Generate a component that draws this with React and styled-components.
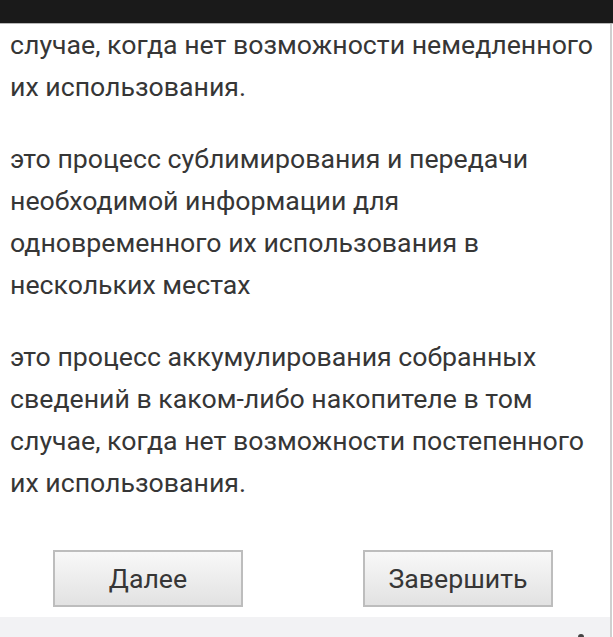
import React from 'react';
import styled, {createGlobalStyle} from 'styled-components';

const GlobalStyle = createGlobalStyle`
  html, body {
    margin: 0;
    padding: 0;
    background: #ffffff;
    font-family: Roboto, "Noto Sans", sans-serif;
    overflow: hidden;
  }
`;

const Screen = styled.div`
  width: 613px;
  height: 637px;
  display: flex;
  flex-direction: column;
  overflow: hidden;
`;

const StatusBar = styled.div`
  height: 23px;
  flex: 0 0 auto;
  background: #1a1a1a;
  border-bottom: 1px solid #b8b8b8;
`;

const Page = styled.div`
  flex: 1 1 auto;
  display: flex;
  flex-direction: column;
  border-right: 2px solid #cfcfcf;
  margin-right: 1px;
  overflow: hidden;
`;

const Content = styled.div`
  flex: 1 1 auto;
  display: flex;
  flex-direction: column;
  padding-left: 10px;
`;

const Answer = styled.p`
  margin: 0 0 30px;
  font-size: 26.7px;
  line-height: 42px;
  color: #363636;
`;

const Buttons = styled.div`
  display: flex;
  gap: 120px;
  padding: 16px 0 0 43px;
`;

const Button = styled.button`
  width: 190px;
  height: 57px;
  border: 2px solid #bdbdbd;
  background: linear-gradient(#f8f8f8, #e2e2e2);
  font-family: Roboto, "Noto Sans", sans-serif;
  font-size: 26.7px;
  color: #363636;
  padding: 0;
`;

const BottomBar = styled.div`
  height: 20px;
  flex: 0 0 auto;
  background: #f2f2f4;
  position: relative;
`;

const Dot = styled.span`
  position: absolute;
  left: 578px;
  top: 17px;
  width: 6px;
  height: 6px;
  border-radius: 50%;
  background: #444;
`;

const answers = [
  'случае, когда нет возможности немедленного их использования.',
  'это процесс сублимирования и передачи необходимой информации для одновременного их использования в нескольких местах',
  'это процесс аккумулирования собранных сведений в каком-либо накопителе в том случае, когда нет возможности постепенного их использования.',
];

const App = () => (
  <Screen>
    <GlobalStyle />
    <StatusBar />
    <Page>
      <Content>
        {answers.map((text, i) => (
          <Answer key={i}>{text}</Answer>
        ))}
        <Buttons>
          <Button>Далее</Button>
          <Button>Завершить</Button>
        </Buttons>
      </Content>
      <BottomBar>
        <Dot />
      </BottomBar>
    </Page>
  </Screen>
);

export default App;
